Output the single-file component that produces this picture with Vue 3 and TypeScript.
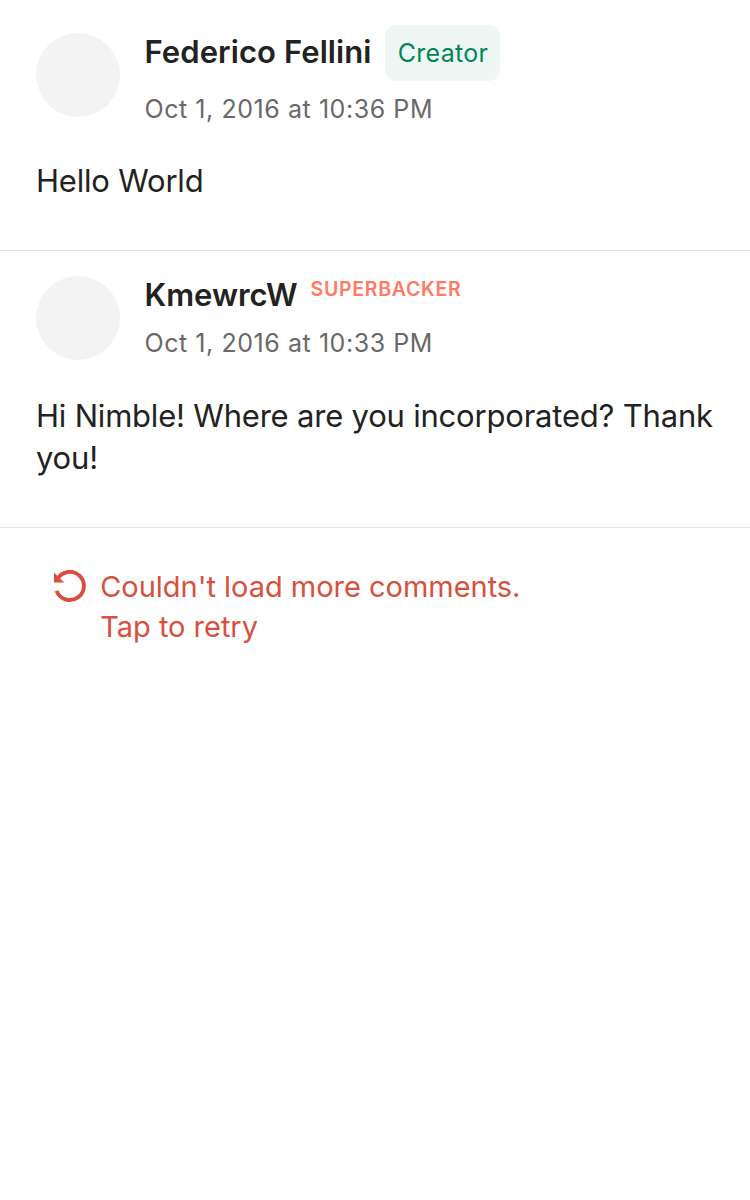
<script setup lang="ts">
interface Comment {
  id: number
  author: string
  badge: string
  kind: 'creator' | 'superbacker'
  date: string
  body: string
}

const comments: Comment[] = [
  { id: 1, author: 'Federico Fellini', badge: 'Creator', kind: 'creator', date: 'Oct 1, 2016 at 10:36 PM', body: 'Hello World' },
  { id: 2, author: 'KmewrcW', badge: 'SUPERBACKER', kind: 'superbacker', date: 'Oct 1, 2016 at 10:33 PM', body: 'Hi Nimble! Where are you incorporated? Thank you!' },
]
</script>

<template>
  <main class="page">
    <article v-for="c in comments" :key="c.id" class="comment" :class="c.kind">
      <header class="head">
        <div class="avatar"></div>
        <div class="meta">
          <div class="line">
            <span class="author">{{ c.author }}</span>
            <span class="badge">{{ c.badge }}</span>
          </div>
          <time class="date">{{ c.date }}</time>
        </div>
      </header>
      <p class="body">{{ c.body }}</p>
    </article>
    <button class="retry" type="button">
      <svg class="icon" viewBox="0 0 34 34" aria-hidden="true">
        <path d="M4.6 8.85 A14.1 14.1 0 1 1 3.6 20.85" fill="none" stroke="currentColor" stroke-width="3.9" />
        <path d="M1 2.4 L1 12.4 L11.2 12.4 Z" fill="currentColor" />
      </svg>
      <span class="message">Couldn't load more comments.<br />Tap to retry</span>
    </button>
  </main>
</template>

<style>
body {
  margin: 0;
  background: #fff;
}
</style>

<style scoped>
.page {
  height: 1200px;
  font-family: Inter, "Liberation Sans", sans-serif;
  color: #222;
}
.comment {
  box-sizing: border-box;
  border-bottom: 1px solid #e3e3e3;
  padding: 25px 36px 0;
}
.creator { height: 251px; }
.superbacker { height: 277px; }
.head {
  display: flex;
  gap: 24.5px;
}
.avatar {
  width: 84px;
  height: 84px;
  border-radius: 50%;
  background: #f3f3f3;
}
.creator .avatar { margin-top: 8px; }
.line {
  display: flex;
  gap: 14px;
}
.creator .line { height: 56px; align-items: center; }
.superbacker .line { height: 39px; align-items: flex-start; gap: 13px; }
.author {
  font-size: 31px;
  line-height: 40px;
  font-weight: 600;
  letter-spacing: 0.08px;
  white-space: nowrap;
}
.creator .author { margin-top: -2px; }
.superbacker .author { margin-top: -1px; letter-spacing: -0.05px; }
.creator .badge {
  box-sizing: border-box;
  width: 115px;
  height: 56px;
  border-radius: 11px;
  background: #eff7f5;
  color: #038558;
  font-size: 25px;
  line-height: 56px;
  letter-spacing: 0.25px;
  text-align: center;
}
.superbacker .badge {
  color: #ff7a64;
  font-size: 19.5px;
  line-height: 26px;
  font-weight: 580;
  letter-spacing: 0.72px;
}
.date {
  display: block;
  margin-top: 12px;
  font-size: 25px;
  line-height: 32px;
  letter-spacing: 0.56px;
  color: #696969;
  white-space: nowrap;
}
.body {
  margin: 35px 0 0;
  font-size: 31px;
  line-height: 42px;
  letter-spacing: -0.2px;
}
.retry {
  display: flex;
  gap: 13.2px;
  margin: 0;
  border: 0;
  padding: 39px 0 0 53px;
  background: none;
  color: #d8503d;
  font: inherit;
  text-align: left;
}
.icon {
  width: 34px;
  height: 34px;
  margin-top: 3px;
}
.message {
  font-size: 29px;
  line-height: 40px;
  letter-spacing: -0.02px;
}
</style>
